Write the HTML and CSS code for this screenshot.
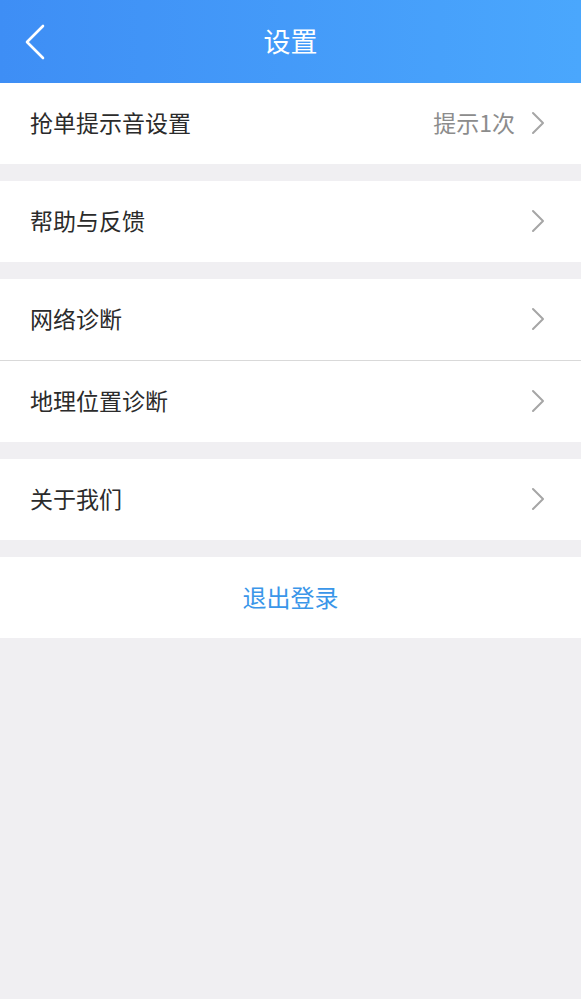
FILE: index.html
```html
<!DOCTYPE html>
<html lang="zh-CN">
<head>
<meta charset="utf-8">
<title>设置</title>
<link rel="stylesheet" href="styles.css">
</head>
<body>
<header class="nav">
  <span class="back">
    <svg width="24" height="38" viewBox="0 0 24 38"><path d="M19 2 L3 18 L19 34" fill="none" stroke="#fff" stroke-width="2.6" stroke-linecap="round" stroke-linejoin="round"/></svg>
  </span>
  <h1 class="title">设置</h1>
</header>
<main class="content">
  <section class="group">
    <div class="row"><span class="label">抢单提示音设置</span><span class="value">提示1次</span><svg class="chev" width="14" height="24" viewBox="0 0 14 24"><path d="M2 2 L12 12 L2 22" fill="none" stroke="#a6a6a6" stroke-width="2" stroke-linecap="round" stroke-linejoin="round"/></svg></div>
  </section>
  <section class="group">
    <div class="row"><span class="label">帮助与反馈</span><svg class="chev" width="14" height="24" viewBox="0 0 14 24"><path d="M2 2 L12 12 L2 22" fill="none" stroke="#a6a6a6" stroke-width="2" stroke-linecap="round" stroke-linejoin="round"/></svg></div>
  </section>
  <section class="group">
    <div class="row"><span class="label">网络诊断</span><svg class="chev" width="14" height="24" viewBox="0 0 14 24"><path d="M2 2 L12 12 L2 22" fill="none" stroke="#a6a6a6" stroke-width="2" stroke-linecap="round" stroke-linejoin="round"/></svg></div>
    <div class="divider"></div>
    <div class="row"><span class="label">地理位置诊断</span><svg class="chev" width="14" height="24" viewBox="0 0 14 24"><path d="M2 2 L12 12 L2 22" fill="none" stroke="#a6a6a6" stroke-width="2" stroke-linecap="round" stroke-linejoin="round"/></svg></div>
  </section>
  <section class="group">
    <div class="row"><span class="label">关于我们</span><svg class="chev" width="14" height="24" viewBox="0 0 14 24"><path d="M2 2 L12 12 L2 22" fill="none" stroke="#a6a6a6" stroke-width="2" stroke-linecap="round" stroke-linejoin="round"/></svg></div>
  </section>
  <section class="group">
    <div class="row logout">退出登录</div>
  </section>
</main>
</body>
</html>
```
FILE: styles.css
```css
html, body {
  margin: 0;
  padding: 0;
  background: #f0eff2;
  font-family: "Noto Sans CJK SC", "Noto Sans", sans-serif;
}
.nav {
  height: 83px;
  background: linear-gradient(90deg, #3e8ef5 0%, #4aa7fd 100%);
  display: flex;
  align-items: center;
  justify-content: center;
  position: relative;
}
.back {
  position: absolute;
  left: 24px;
  top: 24px;
  display: flex;
}
.title {
  margin: 0 0 2px;
  color: #fff;
  font-size: 27px;
  font-weight: 400;
  line-height: 1;
}
.content {
  display: flex;
  flex-direction: column;
}
.group {
  background: #fff;
  margin-bottom: 17px;
  display: flex;
  flex-direction: column;
}
.row {
  height: 81px;
  box-sizing: border-box;
  display: flex;
  align-items: center;
  padding: 0 36px 2px 30px;
  font-size: 23px;
  line-height: 1;
  color: #2b2b2b;
}
.label {
  flex: 1;
}
.value {
  color: #8c8c8c;
  margin-right: 16px;
}
.chev {
  display: block;
}
.divider {
  height: 1px;
  background: #d9d9d9;
}
.logout {
  justify-content: center;
  padding: 0 0 2px;
  color: #3a96e9;
  font-size: 24px;
}
```
